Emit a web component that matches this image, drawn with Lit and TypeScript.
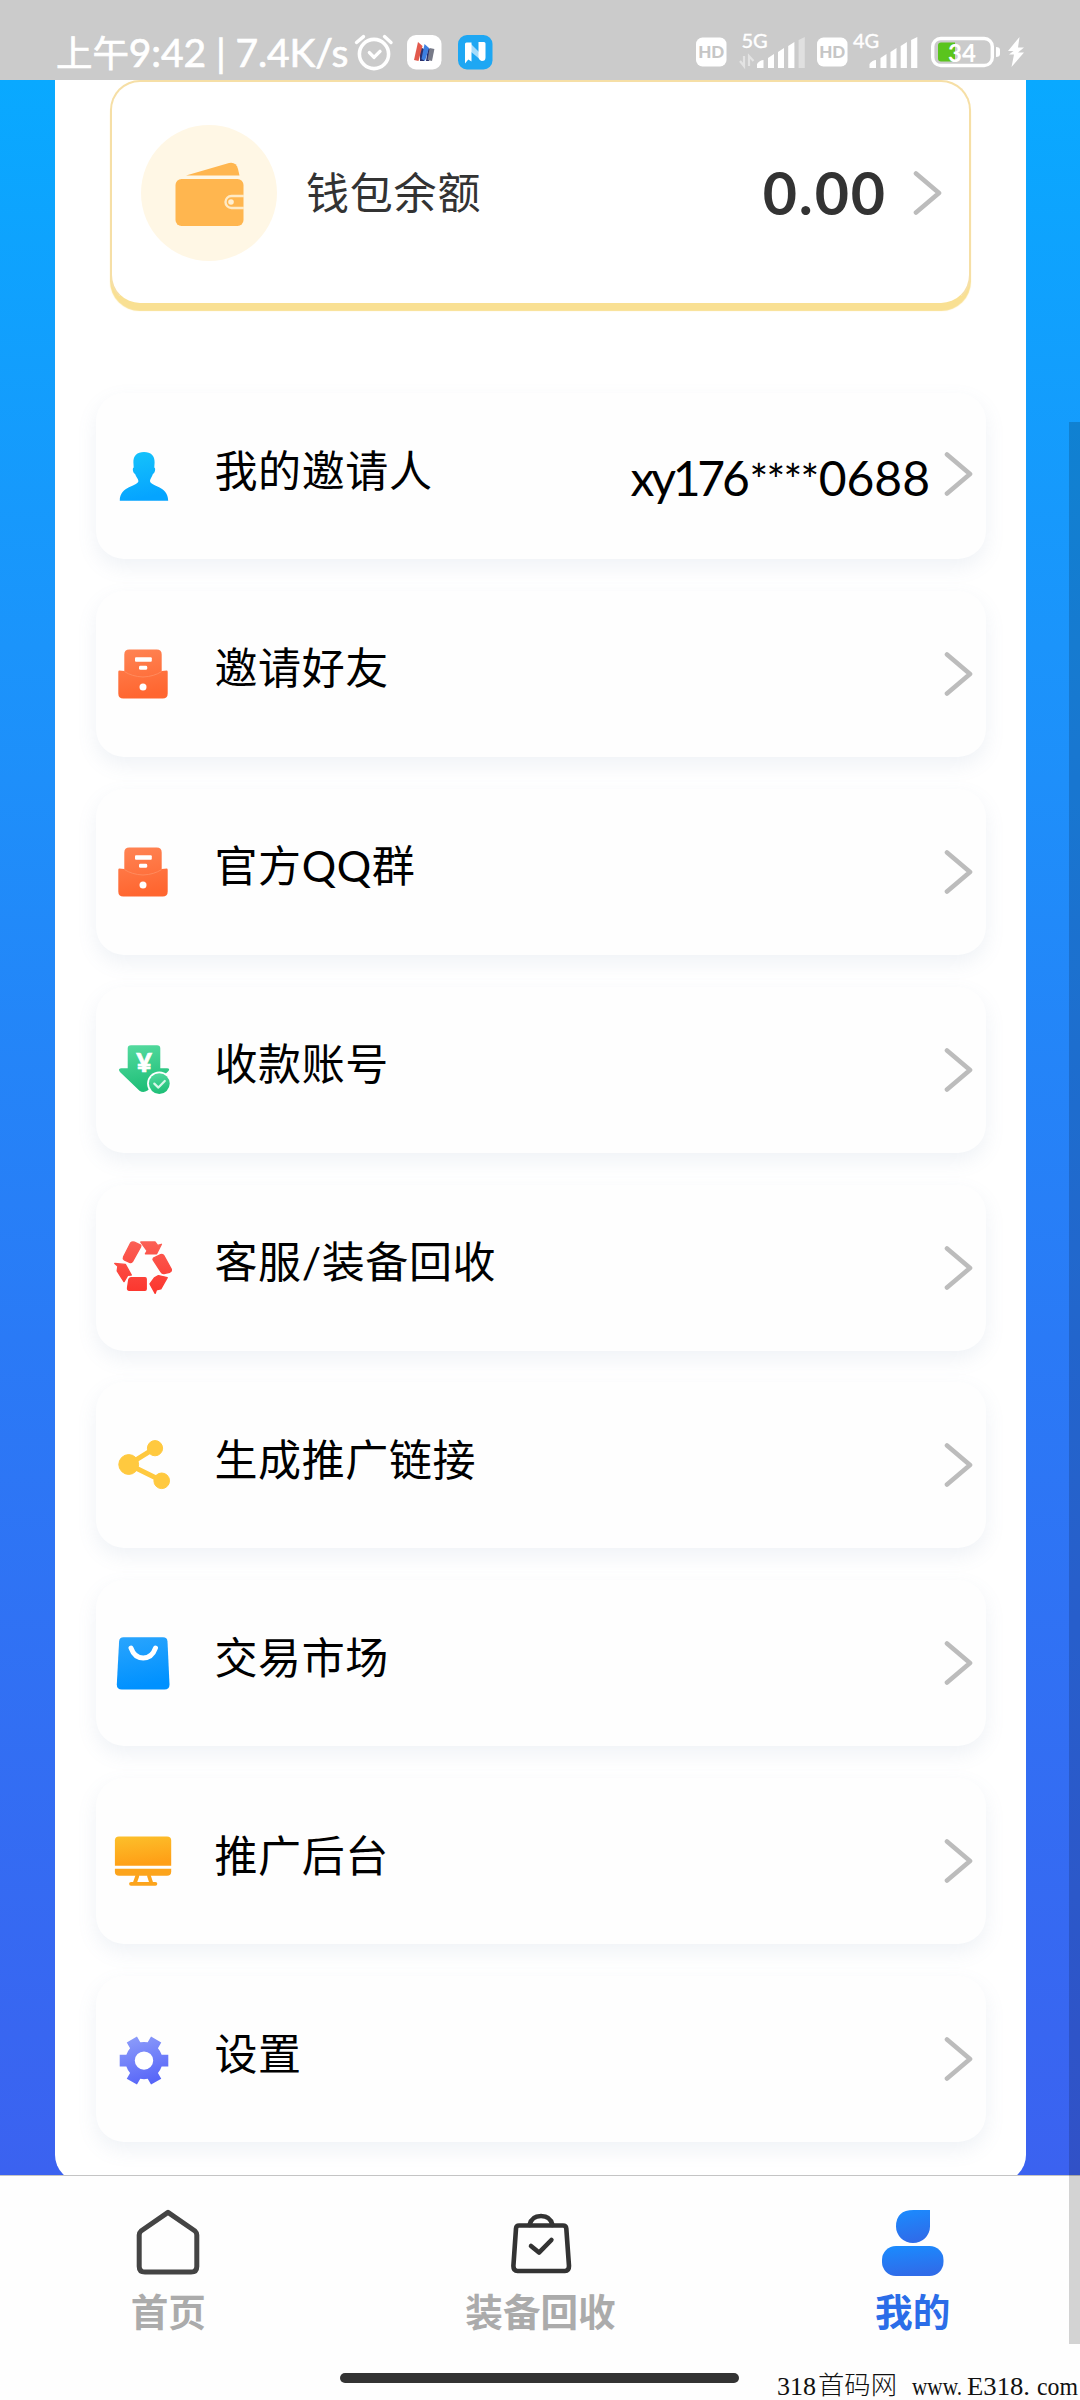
import { LitElement, html, svg, css, nothing } from "lit";
import type { SVGTemplateResult } from "lit";
import { customElement, property } from "lit/decorators.js";

const gradient = (id: string, from: string, to: string) => svg`
  <defs>
    <linearGradient id=${id} x1="0" y1="0" x2="0.2" y2="1">
      <stop offset="0" stop-color=${from}></stop>
      <stop offset="1" stop-color=${to}></stop>
    </linearGradient>
  </defs>`;

const inboxIcon = svg`
  ${gradient("g", "#ff8454", "#ff6630")}
  <path fill="url(#g)" d="M15.3 5.4H42.7Q47.7 5.4 47.7 10.4V27L53 26.5Q53.7 26.6 53.7 28V49.4Q53.7 54.4 48.7 54.4H9.3Q4.3 54.4 4.3 49.4V28Q4.3 26.6 5 26.5L10.3 27V10.4Q10.3 5.4 15.3 5.4Z"></path>
  <path fill="none" stroke="#ff8a5c" stroke-width="1" d="M10.3 27.5Q18 32.5 29 33Q40 32.5 47.7 27.5"></path>
  <rect x="21" y="13.2" width="16.8" height="4.6" rx="1" fill="#fff"></rect>
  <rect x="25" y="21.8" width="8.2" height="4" rx="1.4" fill="#fff"></rect>
  <circle cx="29" cy="43" r="3.5" fill="#fff"></circle>`;

const gearTeeth = [0, 60, 120].map(
  (a) => svg`<rect x="5.7" y="25.7" width="48.6" height="11.8" transform="rotate(${a} 30 31.6)"></rect>`
);

const icons: Record<string, SVGTemplateResult> = {
  person: svg`
    ${gradient("g", "#16c4fb", "#05a4ff")}
    <path fill="url(#g)" d="M30 6C37 6 40.8 10 40.6 16.5L40.3 21.5C42.2 22.5 40.6 27.5 38.9 28C38 31 36.2 32.6 36 35C36.2 40.5 54.2 39.5 54.2 54.8H5.8C5.8 39.5 24.2 40.5 24.4 35C24.2 32.6 22 31 21.1 28C19.4 27.5 17.8 22.5 19.7 21.5L19.4 16.5C19.2 10 23 6 30 6Z"></path>`,
  inbox: inboxIcon,
  payee: svg`
    ${gradient("g", "#56dba0", "#1fbf78")}
    <path fill="url(#g)" d="M17 5.3H43Q46.3 5.3 46.3 8.6V28.2H53Q56.8 28.6 54 31.6L33.5 50.5Q29.5 53.3 25.5 50.8L6.2 32.2Q3.4 28.8 7 28.2H13.7V8.6Q13.7 5.3 17 5.3Z"></path>
    <text x="30" y="31.8" text-anchor="middle" fill="#fff" stroke="#fff" stroke-width="0.6" font-family="Lato, sans-serif" font-size="27" font-weight="900">¥</text>
    <circle cx="45.3" cy="43.6" r="12.2" fill="#fff"></circle>
    <circle cx="45.3" cy="43.6" r="10.4" fill="url(#g)"></circle>
    <path fill="none" stroke="#d8f7e8" stroke-width="2.2" stroke-linecap="round" stroke-linejoin="round" d="M40.3 43.6L44.4 47.6L50.8 41"></path>`,
  recycle: svg`
    <defs>
      <linearGradient id="g" gradientUnits="userSpaceOnUse" x1="30" y1="3" x2="30" y2="56">
        <stop offset="0" stop-color="#fb6056"></stop>
        <stop offset="1" stop-color="#fc342c"></stop>
      </linearGradient>
    </defs>
    <g fill="url(#g)" stroke="url(#g)" stroke-width="1.4" stroke-linejoin="round">
      <path d="M16.6 5Q18.2 3.4 20.4 4.2L26.2 6.8Q27.4 7.6 26.6 9L18.4 23.6Q17.2 25 15.6 24.4L10.2 21.8Q8.8 20.6 9.6 18.8Z"></path>
      <path d="M26.8 4H41L43.6 7.4L47.4 6.3L42.6 15.8H31.4L33.2 12.8Z"></path>
      <path d="M39.4 20.2L46.6 16.6Q48.8 15.8 49.8 17.6L57.2 31Q57.8 33.4 55.8 34.2L50 35.6Q48 35.8 47.2 34.2L39 21.6Z"></path>
      <path d="M44.4 37.6L53.2 39.6L46.8 50.8L42.4 51.8L41.2 55.4L36 46L40.4 39.8Z"></path>
      <path d="M17 39.7H31Q32.2 39.8 32.2 41V51Q32.2 52.4 31 52.4H15.4Q13.2 52 13.6 49.6L14.8 41.6Q15.2 39.8 17 39.7Z"></path>
      <path d="M0.8 25.5L11.3 26.4L17.3 37L13.8 37.2L10 43.6Q6.6 38.6 3.2 33L3.9 28.2Z"></path>
    </g>`,
  share: svg`
    <g fill="#ffc93f" stroke="#ffc93f">
      <path stroke-width="5" fill="none" d="M41 13.2L14.7 29.5L47.7 45.8"></path>
      <circle cx="14.7" cy="29.5" r="9.9"></circle>
      <circle cx="41" cy="13.2" r="7.6"></circle>
      <circle cx="47.7" cy="45.8" r="7.8"></circle>
    </g>`,
  bag: svg`
    ${gradient("g", "#2aa5fd", "#0091ff")}
    <path fill="url(#g)" d="M9.5 4.3H49Q53.2 4.3 53.5 8.5L55.5 51.5Q55.5 56.6 50.5 56.6H7.8Q2.8 56.6 2.8 51.5L5.1 8.5Q5.4 4.3 9.5 4.3Z"></path>
    <path fill="none" stroke="#fff" stroke-width="5" stroke-linecap="round" d="M17 15Q20.5 25 29.2 25Q38 25 41.5 15"></path>`,
  monitor: svg`
    ${gradient("g", "#fcc02b", "#ff9f16")}
    <path fill="url(#g)" d="M5 5.4H53Q57.2 5.4 57.2 9.6V34.8H0.9V9.6Q0.9 5.4 5 5.4Z"></path>
    <path fill="#fca41c" d="M0.9 37.8H57.2V40.4Q57.2 44.8 53 44.8H5Q0.9 44.8 0.9 40.4Z"></path>
    <path fill="none" stroke="#fca41c" stroke-width="3.8" stroke-linecap="round" d="M23.3 45L20.8 52M35 45L37.3 52M17 52.8H41.4"></path>`,
  gear: svg`
    <defs>
      <linearGradient id="g" gradientUnits="userSpaceOnUse" x1="20" y1="7" x2="36" y2="56">
        <stop offset="0" stop-color="#8c9cfa"></stop>
        <stop offset="1" stop-color="#5563f8"></stop>
      </linearGradient>
      <clipPath id="gear">
        <circle cx="30" cy="31.6" r="18.6"></circle>
        ${gearTeeth}
      </clipPath>
    </defs>
    <rect width="60" height="60" fill="url(#g)" clip-path="url(#gear)"></rect>
    <circle cx="30" cy="31.6" r="9.2" fill="#fff"></circle>`,
};

const chevron = html`
  <svg class="chevron" width="30" height="46" viewBox="0 0 30 46">
    <path d="M3 3.4L26 23L3 42.6" fill="none" stroke="#bcbcbc" stroke-width="4.6" stroke-linecap="round" stroke-linejoin="round"></path>
  </svg>`;

@customElement("menu-row")
class MenuRow extends LitElement {
  @property() icon = "";
  @property() label = "";
  @property() value = "";

  static styles = css`
    :host {
      display: flex;
      align-items: center;
      box-sizing: border-box;
      height: 166px;
      padding: 0 12px 0 18px;
      border-radius: 28px;
      background: #fefefe;
      box-shadow: 0 8px 20px rgba(110, 140, 170, 0.11);
    }
    .icon {
      flex: none;
      display: block;
      margin-right: 40.5px;
    }
    .label {
      flex: 1;
      padding-bottom: 11px;
      font-size: 43px;
      letter-spacing: 0.6px;
      line-height: 60px;
      color: #000;
      white-space: nowrap;
    }
    .value {
      margin-right: 14px;
      padding-top: 5px;
      font-size: 48px;
      line-height: 60px;
      color: #000;
    }
    .head {
      letter-spacing: -3.2px;
    }
    .mask {
      font-size: 44px;
      letter-spacing: -1.7px;
      margin: 0 1px 0 3px;
    }
    .chevron {
      flex: none;
      display: block;
    }
    :host([value]) .chevron {
      margin-bottom: 5px;
    }
  `;

  private renderValue() {
    const [, head, mask, tail] = this.value.match(/^([^*]*)(\**)(.*)$/)!;
    return html`<span class="value"><span class="head">${head}</span><span class="mask">${mask}</span>${tail}</span>`;
  }

  render() {
    return html`
      <svg class="icon" width="60" height="60" viewBox="0 0 60 60">${icons[this.icon]}</svg>
      <span class="label">${this.label}</span>
      ${this.value ? this.renderValue() : nothing}
      ${chevron}
    `;
  }
}

@customElement("status-bar")
class StatusBar extends LitElement {
  static styles = css`
    :host {
      display: flex;
      justify-content: space-between;
      box-sizing: border-box;
      height: 80px;
      padding: 30px 52px 0 56px;
      background: #cbcbcb;
      color: #fff;
    }
    .side {
      display: flex;
      align-items: center;
      height: 44px;
    }
    .clock {
      width: 293px;
      font-size: 39px;
      letter-spacing: -0.1px;
      line-height: 44px;
      white-space: pre;
      -webkit-text-stroke: 0.7px #fff;
    }
    .day {
      font-size: 36.5px;
    }
    .app {
      margin-left: 16px;
    }
    svg {
      display: block;
      flex: none;
      overflow: visible;
    }
    text {
      font-family: Lato, sans-serif;
    }
  `;

  private signal(x: number, dim: boolean) {
    return svg`<g transform="translate(${x} 0)" fill="#fff">
      <path d="M0 38V34Q3 30 6.5 30V38Z"></path>
      <path d="M11 38V28L17 24V38Z"></path>
      <path d="M21 38V22L27 18V38Z"></path>
      <path d="M31.2 38V16L37.4 12V38Z"></path>
      <path d="M41.6 38V10L47.8 7V38Z" opacity=${dim ? 0.4 : 1}></path>
    </g>`;
  }

  private hd(x: number) {
    return svg`
      <rect x=${x} y="7.5" width="30.5" height="29" rx="6.5" fill="#fff"></rect>
      <text x=${x + 15.2} y="28" text-anchor="middle" font-size="17" font-weight="900" fill="#c6c6c6">HD</text>`;
  }

  render() {
    return html`
      <div class="side">
        <span class="clock"><span class="day">上午</span>9:42 | 7.4K/s</span>
        <svg width="42" height="40" viewBox="0 0 42 40" fill="none" stroke="#fff" stroke-linecap="round" stroke-linejoin="round">
          <circle cx="25" cy="22" r="14.6" stroke-width="3.6"></circle>
          <path stroke-width="3.4" d="M7.5 10.5L14.5 4.6M35.5 4.6L42 10.5M20.4 20.6L25 25.4L31 19.4"></path>
        </svg>
        <svg class="app" width="35" height="35" viewBox="0 0 35 35">
          <rect width="34.5" height="34.5" rx="9" fill="#fff"></rect>
          <path fill="#2a2f6b" d="M13 12L17 14V26H13ZM21 13L25 15L22 26H19Z"></path>
          <path fill="#e2594c" d="M11 7L15.5 11L11.5 26L7 25Z"></path>
          <path fill="#3d7fe0" d="M17.5 9L22 13L18 26L14.5 24Z"></path>
          <path fill="#777a88" d="M22.6 13L27.4 14L25 26L20.6 25Z"></path>
        </svg>
        <svg class="app" width="35" height="35" viewBox="0 0 35 35">
          <rect width="34.5" height="34.5" rx="9" fill="#1ea7f3"></rect>
          <path fill="#a6dcfb" d="M12 8L24 20V26L12 16Z"></path>
          <path fill="#fff" d="M7 9Q7 7.5 8.5 7.5H13.5V26.5L10.3 24.5L7 28.5ZM20.5 7H26Q27.5 7 27.5 8.5V22.5Q27.5 26 24 26Q21 25.5 20.5 22Z"></path>
        </svg>
      </div>
      <div class="side">
        <svg width="332" height="44" viewBox="0 0 332 44">
          ${this.hd(0)}
          <text x="45.5" y="18" font-size="20" fill="#fff" stroke="#fff" stroke-width="0.4">5G</text>
          <path fill="none" stroke="#e3e3e3" stroke-width="2.2" d="M44 31L48 36V26M53 36V26L57.5 31"></path>
          ${this.signal(61, true)}
          ${this.hd(121)}
          <text x="157" y="18" font-size="20" fill="#fff" stroke="#fff" stroke-width="0.4">4G</text>
          ${this.signal(173.5, false)}
          <rect x="236.7" y="8.5" width="59.6" height="27" rx="8" fill="none" stroke="#fff" stroke-width="3.4"></rect>
          <path fill="#5ac41d" d="M245 12.5H259V31.5H245Q242 31.5 242 28.5V15.5Q242 12.5 245 12.5Z"></path>
          <path fill="#fff" d="M300 17Q304 17 304 20V24Q304 27 300 27Z"></path>
          <text x="252" y="31.5" font-size="24" font-weight="700" fill="#fff">34</text>
          <path fill="#fff" d="M323.5 7L312 21H317.5L313 24.5H318L315.5 37L328 22.5H322L328 17.5H322Z"></path>
        </svg>
      </div>
    `;
  }
}

@customElement("wallet-card")
class WalletCard extends LitElement {
  static styles = css`
    :host {
      display: flex;
      align-items: center;
      box-sizing: border-box;
      height: 225px;
      padding: 0 26px 0 29px;
      border: 2px solid #f6dfa6;
      border-bottom-color: #f9e093;
      border-radius: 30px;
      background: #fff;
      box-shadow: 0 6px 1px -0.5px #f9e093;
    }
    .badge {
      flex: none;
      margin-right: 29px;
    }
    .title {
      flex: 1;
      padding-bottom: 6px;
      font-size: 43px;
      letter-spacing: 0.8px;
      color: #333;
    }
    .amount {
      margin-right: 26px;
      font-size: 59px;
      font-weight: 700;
      letter-spacing: 1.9px;
      line-height: 70px;
      color: #333;
    }
  `;

  render() {
    return html`
      <svg class="badge" width="136" height="136" viewBox="0 0 136 136">
        <circle cx="68" cy="68" r="68" fill="#fff7e5"></circle>
        <g fill="#ffb64f">
          <path d="M45 50.5L88 38Q95 36.5 97 44L98.5 50.5Z"></path>
          <rect x="34.5" y="54" width="68" height="47" rx="6"></rect>
        </g>
        <path d="M103 71H90.5A6 6 0 0 0 90.5 83H103" fill="none" stroke="#ffeac5" stroke-width="2.4"></path>
        <circle cx="90" cy="77" r="2.8" fill="#fff0d3"></circle>
      </svg>
      <span class="title">钱包余额</span>
      <span class="amount">0.00</span>
      ${chevron}
    `;
  }
}

@customElement("tab-bar")
class TabBar extends LitElement {
  static styles = css`
    :host {
      display: flex;
      justify-content: space-around;
      box-sizing: border-box;
      height: 225px;
      padding: 33px 0 0 1px;
      border-top: 1px solid #c4c4c4;
      background: #fefefe;
    }
    .tab {
      display: flex;
      flex-direction: column;
      align-items: center;
      gap: 10px;
      font-size: 37.6px;
      font-weight: 700;
      line-height: 50px;
      color: #ababab;
    }
    .active {
      color: #2b6de8;
    }
    svg {
      display: block;
    }
  `;

  render() {
    return html`
      <div class="tab">
        <svg width="66" height="68" viewBox="0 0 66 68">
          <path d="M33 3.4L60 22Q61.8 23.6 61.8 26V57.4Q61.8 63 56 63H10Q4.2 63 4.2 57.4V26Q4.2 23.6 6 22Z" fill="none" stroke="#444" stroke-width="5" stroke-linejoin="round"></path>
        </svg>
        <span>首页</span>
      </div>
      <div class="tab">
        <svg width="66" height="68" viewBox="-1 0 66 68" fill="none" stroke="#333" stroke-width="4.6" stroke-linecap="round" stroke-linejoin="round">
          <path d="M11 16.5H55Q58 16.5 58.3 19.5L61 57Q61 62 57 62H9.5Q5.4 62 5.4 57L8 19.5Q8.3 16.5 11 16.5Z"></path>
          <path d="M21.5 16Q23.5 7 33 7Q42.5 7 44.5 16M23 37L31 43.6L43.4 31"></path>
        </svg>
        <span>装备回收</span>
      </div>
      <div class="tab active">
        <svg width="66" height="68" viewBox="0 0 66 68">
          ${gradient("me", "#1a8cff", "#2f6ce9")}
          <g fill="url(#me)">
            <path d="M33.5 1H50V17.5A17 16.5 0 0 1 16 17.5Q16 1 33.5 1Z"></path>
            <rect x="2" y="37" width="61.5" height="30" rx="14"></rect>
          </g>
        </svg>
        <span>我的</span>
      </div>
    `;
  }
}

interface Row {
  icon: string;
  label: string;
  value?: string;
}

const rows: Row[] = [
  { icon: "person", label: "我的邀请人", value: "xy176****0688" },
  { icon: "inbox", label: "邀请好友" },
  { icon: "inbox", label: "官方QQ群" },
  { icon: "payee", label: "收款账号" },
  { icon: "recycle", label: "客服/装备回收" },
  { icon: "share", label: "生成推广链接" },
  { icon: "bag", label: "交易市场" },
  { icon: "monitor", label: "推广后台" },
  { icon: "gear", label: "设置" },
];

@customElement("app-root")
class AppRoot extends LitElement {
  static styles = css`
    :host {
      position: relative;
      display: flex;
      flex-direction: column;
      width: 1080px;
      height: 2400px;
      overflow: hidden;
      background: #fefefe;
      font-family: Lato, "Noto Sans CJK SC", sans-serif;
    }
    .page {
      flex: 1;
      min-height: 0;
      overflow: hidden;
      padding: 0 54px 0 55px;
      background: linear-gradient(#09a9ff, #1b94fb 27%, #2a7af6 60%, #3b62f0);
    }
    .panel {
      box-sizing: border-box;
      height: 2102px;
      padding: 0 40px 0 41px;
      border-radius: 0 0 27px 27px;
      background: #fff;
    }
    .wallet {
      margin: 0 15px 0 14px;
    }
    .list {
      display: flex;
      flex-direction: column;
      gap: 31.9px;
      margin-top: 88px;
    }
    .scrollbar {
      position: absolute;
      top: 422px;
      right: 0;
      width: 11px;
      height: 1922px;
      background: rgba(0, 0, 0, 0.17);
    }
    .home {
      position: absolute;
      left: 340px;
      top: 2373px;
      width: 399px;
      height: 10px;
      border-radius: 5px;
      background: #333;
    }
    .site {
      position: absolute;
      right: 0;
      bottom: 0;
      overflow: visible;
      font-family: "Liberation Serif", "Noto Sans CJK SC", serif;
      font-size: 26px;
      fill: #111;
    }
    .han {
      font-family: "Noto Sans CJK SC", sans-serif;
      font-weight: 300;
      font-size: 25px;
    }
  `;

  render() {
    return html`
      <status-bar></status-bar>
      <div class="page">
        <div class="panel">
          <wallet-card class="wallet"></wallet-card>
          <div class="list">
            ${rows.map(
              (r) => html`<menu-row icon=${r.icon} label=${r.label} value=${r.value ?? nothing}></menu-row>`
            )}
          </div>
        </div>
      </div>
      <tab-bar></tab-bar>
      <div class="scrollbar"></div>
      <div class="home"></div>
      <svg class="site" width="304" height="36" viewBox="0 0 304 36">
        <text x="1" y="31" textLength="39" lengthAdjust="spacingAndGlyphs">318</text>
        <text class="han" x="42" y="30" textLength="79" lengthAdjust="spacingAndGlyphs">首码网</text>
        <text x="136" y="31" textLength="50" lengthAdjust="spacingAndGlyphs">www.</text>
        <text x="191" y="31" textLength="63" lengthAdjust="spacingAndGlyphs">E318.</text>
        <text x="261" y="31" textLength="41" lengthAdjust="spacingAndGlyphs">com</text>
      </svg>
    `;
  }
}
